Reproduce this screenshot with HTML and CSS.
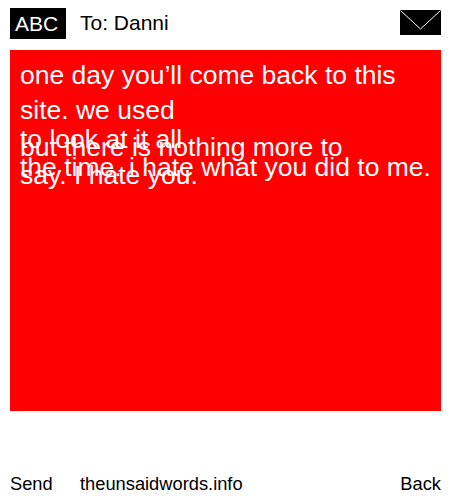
FILE: index.html
```html
<!DOCTYPE html>
<html lang="en">
<head>
<meta charset="utf-8">
<title>theunsaidwords.info</title>
<link rel="stylesheet" href="styles.css">
</head>
<body>
<div class="phone">
  <header class="top">
    <span class="abc">ABC</span>
    <span class="to">To: Danni</span>
    <svg class="mail" viewBox="0 0 41 25" width="41" height="25" aria-hidden="true">
      <rect width="41" height="25" fill="#000"/>
      <path d="M0.5 0.5 L20.5 19 L40.5 0.5" fill="none" stroke="#fff" stroke-width="1"/>
    </svg>
  </header>
  <main class="message">
    <div class="layer">
      <p class="para-a">one day you’ll come back to this<br>site. we used</p>
      <p class="para-b">to look at it all<br>the time. i hate what you did to me.</p>
    </div>
    <div class="layer">
      <p class="para-c">but there is nothing more to<br>say. I hate you.</p>
    </div>
  </main>
  <footer class="bottom">
    <span class="send">Send</span>
    <span class="site">theunsaidwords.info</span>
    <span class="back">Back</span>
  </footer>
</div>
</body>
</html>
```
FILE: styles.css
```css
html, body {
  margin: 0;
  padding: 0;
  background: #fff;
}
.phone {
  width: 431px;
  height: 500px;
  padding: 0 9px 0 10px;
  display: flex;
  flex-direction: column;
  font-family: "Liberation Sans", Arial, sans-serif;
  color: #000;
}
.top {
  display: flex;
  align-items: center;
  height: 50px;
  padding-bottom: 3px;
  box-sizing: border-box;
}
.abc {
  width: 56px;
  height: 31px;
  line-height: 31px;
  background: #000;
  color: #fff;
  text-align: center;
  font-size: 21px;
  text-indent: -3px;
}
.to {
  margin-left: 14px;
  margin-bottom: 1px;
  font-size: 21px;
}
.mail {
  margin-left: auto;
  margin-bottom: 2px;
}
.message {
  height: 361px;
  background: #f00;
  color: #fff;
  font-size: 26.5px;
  display: grid;
  padding: 0 10px;
  box-sizing: border-box;
}
.layer {
  grid-area: 1 / 1;
}
.layer p {
  margin: 0;
}
.para-a {
  padding-top: 8px;
  line-height: 35px;
}
.layer .para-b {
  margin-top: -3px;
  line-height: 28px;
}
.para-c {
  padding-top: 83px;
  line-height: 28px;
}
.bottom {
  margin-top: auto;
  height: 33px;
  display: flex;
  align-items: center;
  font-size: 18.3px;
}
.send {
  width: 70px;
}
.back {
  margin-left: auto;
}
```
